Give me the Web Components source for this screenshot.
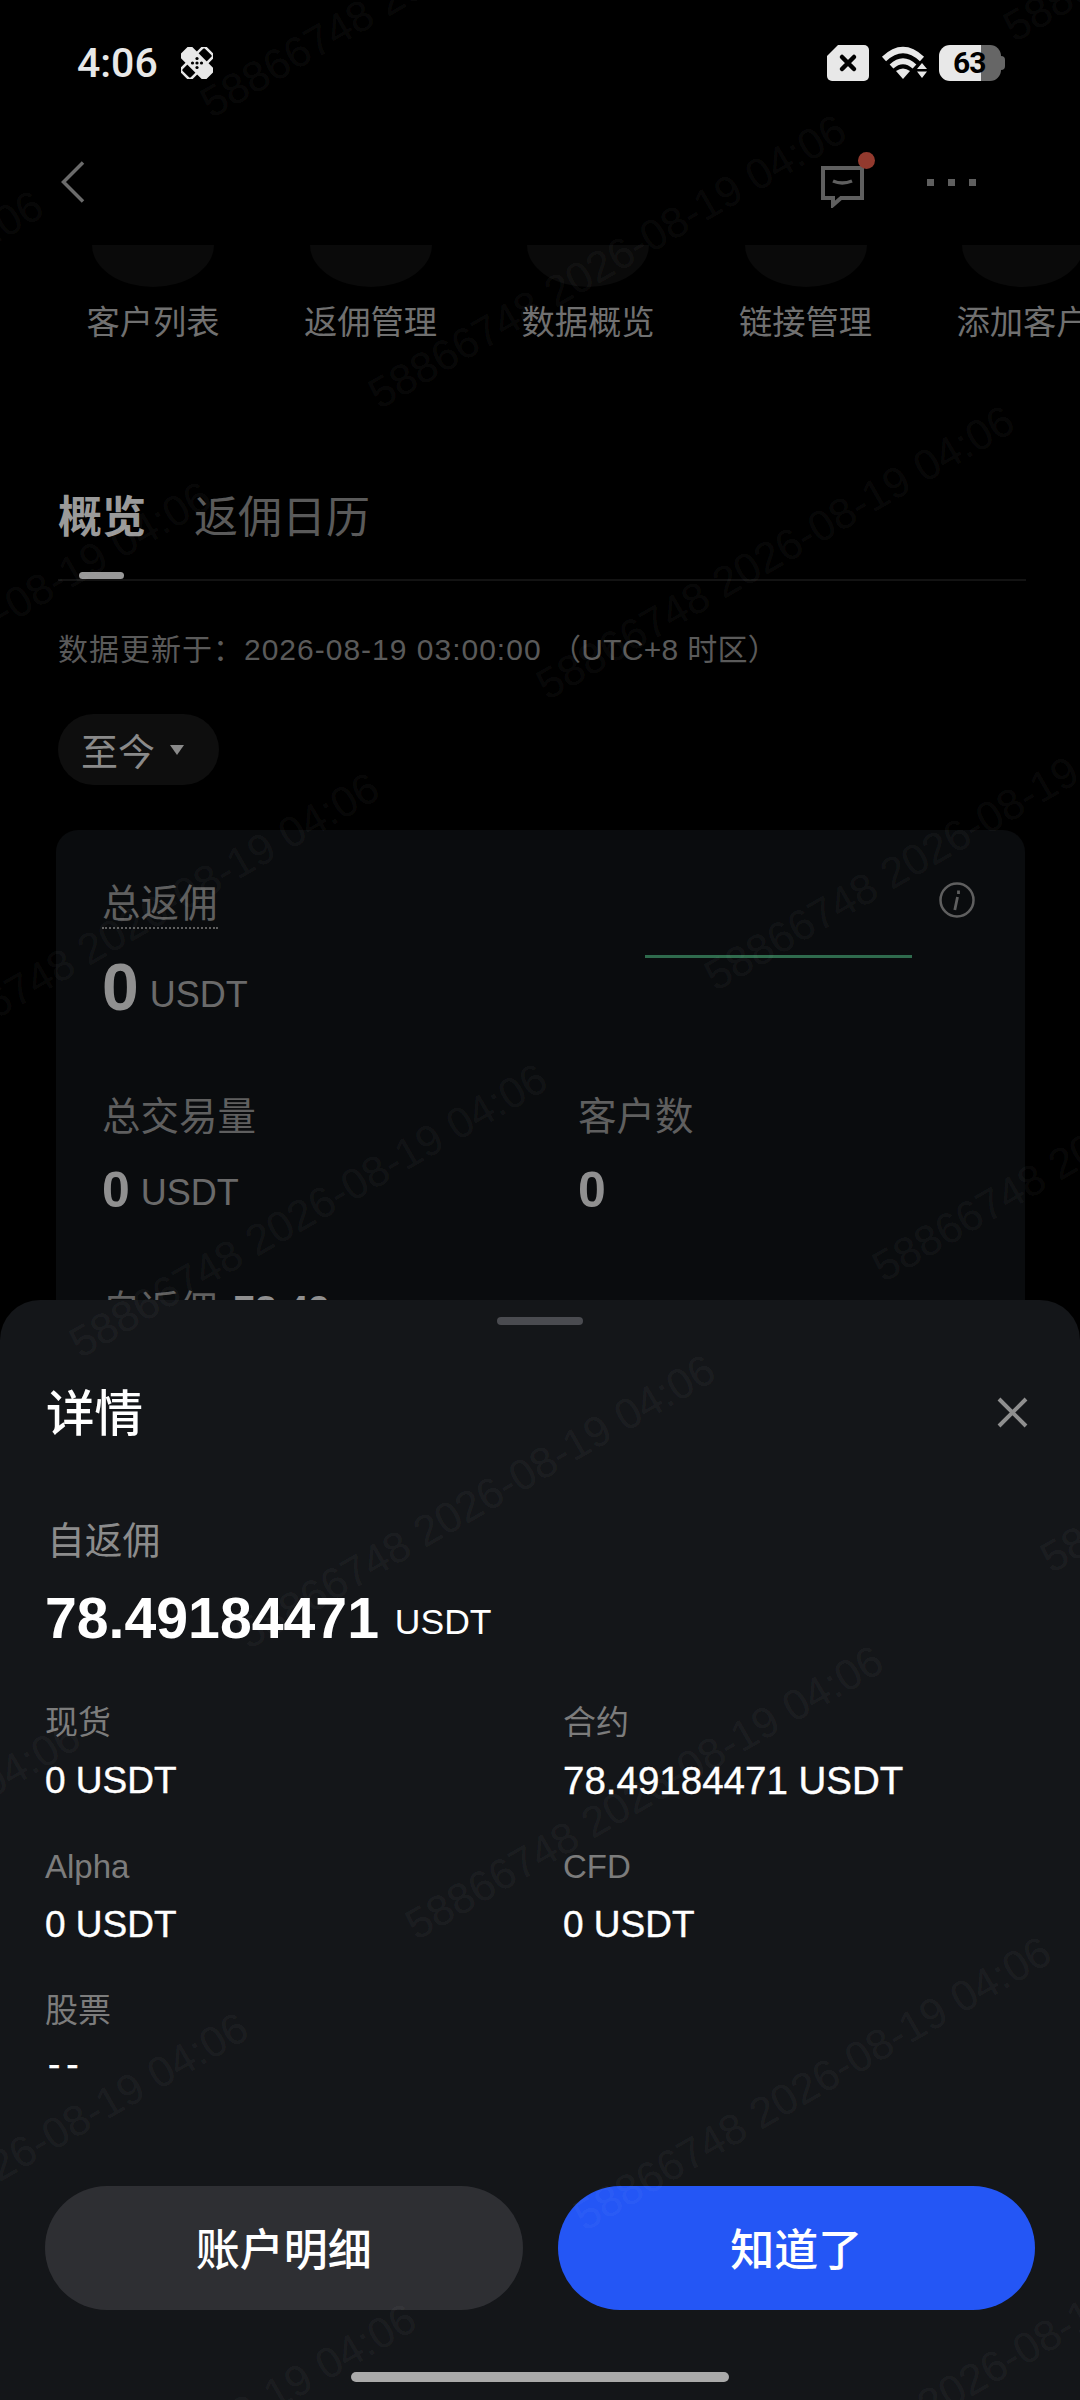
<!DOCTYPE html>
<html lang="zh">
<head>
<meta charset="utf-8">
<title>返佣详情</title>
<style>
  html, body { margin: 0; background: #000; }
  body { font-family: "Liberation Sans", "Noto Sans CJK SC", sans-serif; }
</style>
</head>
<body>

<app-screen>
  <status-bar></status-bar>
  <nav-bar></nav-bar>
  <shortcut-row>
    <shortcut-item>客户列表</shortcut-item>
    <shortcut-item>返佣管理</shortcut-item>
    <shortcut-item>数据概览</shortcut-item>
    <shortcut-item>链接管理</shortcut-item>
    <shortcut-item>添加客户</shortcut-item>
  </shortcut-row>
  <tab-bar></tab-bar>
  <update-note>数据更新于：2026-08-19 03:00:00 <span style="letter-spacing:0.3px">（UTC+8 时区）</span></update-note>
  <range-pill>至今</range-pill>
  <rebate-card></rebate-card>
  <detail-sheet slot="over">
    <detail-field>
      <span slot="label">现货</span>
      0 USDT
    </detail-field>
    <detail-field class="long">
      <span slot="label">合约</span>
      78.49184471 USDT
    </detail-field>
    <detail-field>
      <span slot="label">Alpha</span>
      0 USDT
    </detail-field>
    <detail-field>
      <span slot="label">CFD</span>
      0 USDT
    </detail-field>
    <detail-field class="empty">
      <span slot="label">股票</span>
      --
    </detail-field>
  </detail-sheet>
  <water-mark slot="over" text="58866748 2026-08-19 04:06"></water-mark>
</app-screen>

<script>
const FONT = `"Liberation Sans", "Noto Sans CJK SC", sans-serif`;

// small helper, every element is just a template in an open shadow root
function define( name, html, extra ) {
  const tpl = document.createElement("template");
  tpl.innerHTML = html;
  class El extends HTMLElement {
    constructor() {
      super();
      this.attachShadow( {mode:"open"} );
      this.shadowRoot.appendChild( tpl.content.cloneNode(true) );
    }
    connectedCallback() {
      if( extra ) extra.call( this );
    }
  }
  customElements.define( name, El );
}

define( "app-screen", `
  <style>
    :host{
      display: block;
      position: relative;
      width: 1080px;
      height: 2400px;
      overflow: hidden;
      background: #000;
      font-family: ${FONT};
    }
  </style>
  <slot></slot>
  <slot name="over"></slot>
`);

define( "status-bar", `
  <style>
    :host{
      display: flex;
      align-items: center;
      height: 126px;
      padding: 0 76px 0 77px;
      box-sizing: border-box;
      color: #e8e8e8;
    }
    .time{
      font: 500 41px/1 Roboto, sans-serif;
      margin-right: 23px;
    }
    .right{
      margin-left: auto;
      display: flex;
      align-items: center;
      gap: 12px;
    }
    .battery{
      position: relative;
      width: 62px;
      height: 36px;
      margin-right: 3px;
      border-radius: 11px;
      background: linear-gradient( 90deg, #e8e8e8 42px, #666 42px );
      display: flex;
      align-items: center;
      color: #000;
      font: 700 30px/1 Roboto, sans-serif;
      padding-left: 14px;
      box-sizing: border-box;
      letter-spacing: -1px;
    }
    .battery::after{
      content: "";
      position: absolute;
      right: -4px;
      top: 11px;
      width: 4px;
      height: 14px;
      border-radius: 0 4px 4px 0;
      background: #666;
    }
    svg{ display: block; }
  </style>
  <span class="time">4:06</span>
  <svg width="32" height="32" viewBox="0 0 32 32">
    <g transform="rotate(45 16 16)">
      <rect x="9" y="-1" width="14" height="34" rx="2.5" fill="#000" stroke="#e8e8e8" stroke-width="2.5"/>
    </g>
    <g transform="rotate(-45 16 16)">
      <rect x="8" y="-2" width="16" height="36" rx="3" fill="#e8e8e8"/>
    </g>
    <g fill="#000">
      <circle cx="16" cy="11.5" r="1.6"/><circle cx="11.5" cy="16" r="1.6"/>
      <circle cx="16" cy="20.5" r="1.6"/><circle cx="20.5" cy="16" r="1.6"/>
      <circle cx="16" cy="16" r="1.6"/>
    </g>
  </svg>
  <div class="right">
    <svg width="42" height="36" viewBox="0 0 42 36">
      <path d="M11 0H37a5 5 0 0 1 5 5V31a5 5 0 0 1-5 5H5a5 5 0 0 1-5-5V11Z" fill="#e8e8e8"/>
      <path d="M15 12L27 24M27 12L15 24" stroke="#000" stroke-width="4.5" stroke-linecap="round"/>
    </svg>
    <svg width="46" height="34" viewBox="0 0 46 34">
      <g fill="none" stroke="#e8e8e8">
        <path d="M3 13Q22 -5 41 13" stroke-width="6"/>
        <path d="M10.500 20.500Q22 10 33.500 20.500" stroke-width="5.500"/>
      </g>
      <path d="M15 25Q22 20 29 25L22 33Z" fill="#e8e8e8"/>
      <path d="M36 23L41 17L46 23ZM36 25.500H46L41 32Z" fill="#e8e8e8"/>
    </svg>
    <span class="battery">63</span>
  </div>
`);

define( "nav-bar", `
  <style>
    :host{
      display: flex;
      align-items: center;
      height: 112px;
      padding: 0 104px 0 61px;
      box-sizing: border-box;
    }
    .right{
      margin-left: auto;
      display: flex;
      align-items: center;
      gap: 62px;
    }
    .dots{
      display: flex;
      gap: 14px;
    }
    .dots i{
      width: 7px;
      height: 7px;
      background: #5f5f5f;
    }
    .msg{
      position: relative;
      width: 44px;
      height: 42px;
      top: 5px;
    }
    .msg b{
      position: absolute;
      right: -10px;
      top: -14px;
      width: 17px;
      height: 17px;
      border-radius: 50%;
      background: #933a2e;
    }
  </style>
  <svg width="24" height="42" viewBox="0 0 24 42">
    <path d="M22 1.500L2.500 21L22 40.500" fill="none" stroke="#6b6b6b" stroke-width="3.500"/>
  </svg>
  <div class="right">
    <div class="msg">
      <svg width="44" height="42" viewBox="0 0 44 42">
        <path d="M2 2H41V32H20L12 39V32H2Z" fill="none" stroke="#5f5f5f" stroke-width="4"/>
        <path d="M12 15Q21 19 31 15" fill="none" stroke="#5f5f5f" stroke-width="3.500"/>
      </svg>
      <b></b>
    </div>
    <div class="dots"><i></i><i></i><i></i></div>
  </div>
`);

define( "shortcut-row", `
  <style>
    :host{
      display: flex;
      gap: 85.500px;
      margin-top: 7px;
      padding-left: 87px;
      overflow: hidden;
    }
  </style>
  <slot></slot>
`);

define( "shortcut-item", `
  <style>
    :host{
      display: flex;
      flex: none;
      flex-direction: column;
      align-items: center;
      width: 132px;
      font-size: 33.300px;
      line-height: 46px;
      color: #707070;
      white-space: nowrap;
    }
    .bowl{
      width: 122px;
      height: 42px;
      margin-bottom: 13px;
      border-radius: 0 0 61px 61px / 0 0 42px 42px;
      background: #0a0a0a;
    }
  </style>
  <div class="bowl"></div>
  <slot></slot>
`);

define( "tab-bar", `
  <style>
    :host{
      display: block;
      margin: 142px 54px 0 58px;
      border-bottom: 2px solid #131313;
    }
    .tabs{
      display: flex;
      gap: 48px;
      height: 91px;
      font-size: 44px;
      line-height: 60px;
      color: #5a5a5a;
    }
    .on{
      position: relative;
      font-weight: 700;
      color: #9a9a9a;
    }
    .on::after{
      content: "";
      position: absolute;
      left: 21px;
      bottom: 0;
      width: 45px;
      height: 7px;
      border-radius: 4px;
      background: #999;
    }
  </style>
  <div class="tabs">
    <span class="on">概览</span>
    <span>返佣日历</span>
  </div>
`);

define( "update-note", `
  <style>
    :host{
      display: block;
      margin: 49px 0 0 58px;
      font-size: 30px;
      letter-spacing: 1px;
      line-height: 40px;
      color: #5a5a5a;
      white-space: nowrap;
    }
  </style>
  <slot></slot>
`);

define( "range-pill", `
  <style>
    :host{
      display: flex;
      align-items: center;
      width: 161px;
      height: 71px;
      margin: 44px 0 0 58px;
      padding-left: 23px;
      box-sizing: border-box;
      border-radius: 36px;
      background: #0e0e0e;
      color: #8a8a8a;
      font-size: 37px;
    }
    i{
      margin-left: 15px;
      border-top: 10px solid #8a8a8a;
      border-left: 7px solid transparent;
      border-right: 7px solid transparent;
    }
  </style>
  <slot></slot><i></i>
`);

define( "rebate-card", `
  <style>
    :host{
      display: block;
      margin: 45px 55px 0 56px;
      padding: 52px 50px 0 46px;
      height: 600px;
      border-radius: 22px;
      background: #0a0c0e;
    }
    .top{
      display: flex;
      justify-content: space-between;
    }
    .label{
      font-size: 38.500px;
      line-height: 44px;
      color: #5f5f5f;
    }
    .dotted{
      display: block;
      width: fit-content;
      padding-bottom: 1px;
      border-bottom: 2px dotted #5f5f5f;
    }
    .val{
      color: #909090;
      font-weight: 700;
      white-space: nowrap;
    }
    .val small{
      color: #6a6a6a;
      font-weight: 400;
      font-size: 36px;
      line-height: 1;
      vertical-align: 3px;
    }
    .big{
      margin-top: 23px;
      font-size: 66px;
      line-height: 70px;
    }
    .big small{ margin-left: 11px; }
    .side{
      display: flex;
      flex-direction: column;
      align-items: flex-end;
    }
    .spark{
      width: 267px;
      height: 3px;
      margin: 37px 63px 0 0;
      background: #2f6b4d;
    }
    .grid{
      display: grid;
      grid-template-columns: 476px 1fr;
      margin-top: 73px;
    }
    .mid{
      margin-top: 23px;
      font-size: 50px;
      line-height: 56px;
    }
    .mid small{ margin-left: 11px; vertical-align: 2px; }
    .last{
      margin-top: 70px;
      display: flex;
      gap: 16px;
    }
    .last b{
      color: #909090;
    }
  </style>
  <div class="top">
    <div>
      <span class="label dotted">总返佣</span>
      <div class="val big">0<small>USDT</small></div>
    </div>
    <div class="side">
      <svg width="36" height="36" viewBox="0 0 36 36">
        <circle cx="18" cy="18" r="16.500" fill="none" stroke="#5f5f5f" stroke-width="2.500"/>
        <path d="M19.500 8.500v3.500M18.500 15L15.800 28" fill="none" stroke="#5f5f5f" stroke-width="2.800"/>
      </svg>
      <div class="spark"></div>
    </div>
  </div>
  <div class="grid">
    <div>
      <div class="label">总交易量</div>
      <div class="val mid">0<small>USDT</small></div>
    </div>
    <div>
      <div class="label">客户数</div>
      <div class="val mid">0</div>
    </div>
  </div>
  <div class="label last"><span>自返佣</span><b>78.49</b></div>
`);

define( "detail-sheet", `
  <style>
    :host{
      display: flex;
      flex-direction: column;
      position: absolute;
      left: 0;
      right: 0;
      top: 1300px;
      bottom: 0;
      padding: 17px 45px 18px;
      box-sizing: border-box;
      border-radius: 40px 40px 0 0;
      background: #141619;
    }
    .handle{
      align-self: center;
      width: 86px;
      height: 8px;
      border-radius: 4px;
      background: #4a4b50;
    }
    header{
      display: flex;
      align-items: center;
      justify-content: space-between;
      height: 60px;
      margin-top: 55px;
      padding: 0 7px 0 1px;
      color: #fff;
      font-size: 48.500px;
      font-weight: 500;
    }
    header svg{ position: relative; top: 2px; }
    .label{
      margin-top: 79px;
      padding-left: 2px;
      font-size: 37.800px;
      line-height: 44px;
      color: #8c8c8c;
    }
    .amount{
      margin-top: 23px;
      color: #fff;
      font-size: 57.200px;
      line-height: 64px;
      font-weight: 700;
      white-space: nowrap;
    }
    .amount small{
      font-size: 35.500px;
      font-weight: 400;
      line-height: 1;
      vertical-align: 4px;
    }
    .grid{
      display: grid;
      grid-template-columns: 518px 1fr;
      row-gap: 44px;
      margin-top: 53px;
    }
    .buttons{
      display: grid;
      grid-template-columns: 1fr 1fr;
      gap: 35px;
      margin-top: auto;
    }
    button{
      height: 124px;
      padding: 0 0 3px;
      border: 0;
      border-radius: 62px;
      color: #fff;
      font: 500 44px ${FONT};
      background: #2e2f33;
    }
    .primary{ background: #2456f5; }
    .home{
      align-self: center;
      width: 378px;
      height: 10px;
      margin-top: 62px;
      border-radius: 5px;
      background: #aaa;
    }
  </style>
  <div class="handle"></div>
  <header>
    <span>详情</span>
    <svg width="31" height="31" viewBox="0 0 31 31">
      <path d="M2 2L29 29M29 2L2 29" fill="none" stroke="#8f8f8f" stroke-width="4"/>
    </svg>
  </header>
  <div class="label">自返佣</div>
  <div class="amount">78.49184471 <small>USDT</small></div>
  <div class="grid"><slot></slot></div>
  <div class="buttons">
    <button>账户明细</button>
    <button class="primary">知道了</button>
  </div>
  <div class="home"></div>
`);

define( "detail-field", `
  <style>
    :host{
      display: block;
      color: #fff;
      font-size: 37px;
      line-height: 44px;
      white-space: nowrap;
      -webkit-text-stroke: 0.4px #fff;
    }
    :host(.long){ font-size: 38.500px; }
    :host(.empty){
      letter-spacing: 6px;
      padding-left: 3px;
    }
    .label{
      margin-bottom: 16px;
      font-size: 33px;
      line-height: 40px;
      color: #7c7c7c;
      letter-spacing: 0;
      -webkit-text-stroke: 0;
    }
    :host(.empty) .label{
      margin-left: -3px;
      margin-bottom: 11px;
    }
  </style>
  <div class="label"><slot name="label"></slot></div>
  <slot></slot>
`);

define( "water-mark", `
  <style>
    :host{
      display: block;
      position: absolute;
      inset: 0;
      overflow: hidden;
      pointer-events: none;
    }
    span{
      position: absolute;
      transform: rotate(-30deg);
      transform-origin: 0 100%;
      font-size: 43px;
      line-height: 1;
      color: rgba(255,255,255,0.055);
      white-space: nowrap;
    }
  </style>
`, function() {
  // tiled on a skewed lattice, same as the app draws it
  const text = this.getAttribute("text");
  for( let a = -6; a < 12; a++ ) {
    for( let b = -3; b < 6; b++ ) {
      const x = 383 + a*168 - b*467;
      const y = 416 + a*291 + b*658;
      if( x < -600 || x > 1080 || y < -50 || y > 2750 ) continue;
      const s = document.createElement("span");
      s.textContent = text;
      s.style.left = x + "px";
      s.style.top = (y - 43) + "px";
      this.shadowRoot.appendChild( s );
    }
  }
});
</script>
</body>
</html>
